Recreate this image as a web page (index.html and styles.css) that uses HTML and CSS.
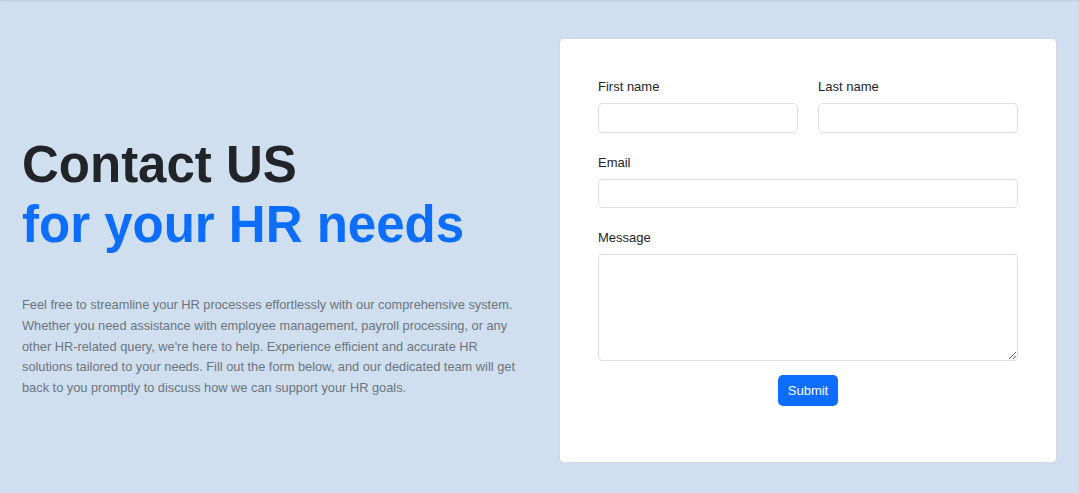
FILE: index.html
```html
<!DOCTYPE html>
<html lang="en">
<head>
<meta charset="utf-8">
<title>Contact US</title>
<link rel="stylesheet" href="styles.css">
</head>
<body>
<main class="page">
  <section class="intro">
    <h1 class="title">Contact US <span class="accent">for your HR needs</span></h1>
    <p class="lead">Feel free to streamline your HR processes effortlessly with our comprehensive system. Whether you need assistance with employee management, payroll processing, or any other HR-related query, we're here to help. Experience efficient and accurate HR solutions tailored to your needs. Fill out the form below, and our dedicated team will get back to you promptly to discuss how we can support your HR goals.</p>
  </section>
  <form class="card">
    <div class="row">
      <div class="field">
        <label class="label" for="first">First name</label>
        <input class="control" id="first" type="text">
      </div>
      <div class="field">
        <label class="label" for="last">Last name</label>
        <input class="control" id="last" type="text">
      </div>
    </div>
    <div class="field">
      <label class="label" for="email">Email</label>
      <input class="control" id="email" type="email">
    </div>
    <div class="field field-last">
      <label class="label" for="msg">Message</label>
      <textarea class="control area" id="msg"></textarea>
    </div>
    <button class="submit" type="button">Submit</button>
  </form>
</main>
</body>
</html>
```

FILE: styles.css
```css
html, body {
  margin: 0;
  padding: 0;
}
body {
  background: #cfdfef;
  font-family: "Liberation Sans", Arial, sans-serif;
  color: #212529;
}
.page {
  display: flex;
  gap: 21px;
  padding: 38px 22px 31px;
  box-shadow: inset 0 2px 2px -1px rgba(0, 0, 0, 0.08);
  min-height: 493px;
  box-sizing: border-box;
}
.intro {
  flex: 1;
  padding-top: 97px;
}
.title {
  margin: 0;
  font-size: 51px;
  line-height: 60px;
  font-weight: 700;
  color: #212529;
}
.accent {
  display: block;
  color: #0d6efd;
}
.lead {
  margin: 40px 0 0;
  max-width: 500px;
  font-size: 12.8px;
  line-height: 20.8px;
  color: #6c757d;
}
.card {
  width: 498px;
  flex: none;
  box-sizing: border-box;
  background: #fff;
  border: 1px solid #d3d7dc;
  border-radius: 5px;
  padding: 38px 38px 56px;
}
.row {
  display: grid;
  grid-template-columns: 1fr 1fr;
  gap: 20px;
}
.field {
  margin-bottom: 20px;
}
.field-last {
  margin-bottom: 14px;
}
.label {
  display: block;
  font-size: 13px;
  line-height: 19.5px;
  margin-bottom: 6.5px;
  color: #212529;
}
.control {
  display: block;
  width: 100%;
  height: 29.5px;
  box-sizing: border-box;
  border: 1px solid #dee2e6;
  border-radius: 4px;
  background: #fff;
  font: inherit;
  font-size: 13px;
  padding: 4px 9px;
  margin: 0;
}
.area {
  height: 106.5px;
  resize: vertical;
}
.submit {
  display: block;
  margin: 0 auto;
  height: 31px;
  padding: 0 10px;
  border: none;
  border-radius: 5px;
  background: #0d6efd;
  color: #fff;
  font-family: "Liberation Sans", Arial, sans-serif;
  font-size: 13px;
}
```
